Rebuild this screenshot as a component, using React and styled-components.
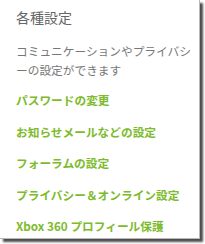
import React from "react";
import styled, { createGlobalStyle } from "styled-components";

const Global = createGlobalStyle`
  html, body { margin: 0; padding: 0; background: #fff; }
  body { font-family: "Noto Sans CJK JP", "Noto Sans", sans-serif; }
`;

const Frame = styled.div`
  width: 205px;
  height: 244px;
  background: #fff;
`;

const Panel = styled.div`
  box-sizing: border-box;
  width: 200px;
  height: 239px;
  background: #fff;
  border-right: 1px solid #b8b8b8;
  border-bottom: 1px solid #b8b8b8;
  box-shadow: 3px 3px 2px rgba(0, 0, 0, 0.7);
  padding: 6px 0 0 16px;
  display: flex;
  flex-direction: column;
`;

const Heading = styled.h2`
  margin: 0;
  font-size: 14px;
  font-weight: normal;
  line-height: 22px;
  color: #666;
`;

const Desc = styled.p`
  margin: 14px 0 0;
  font-size: 11.7px;
  line-height: 18.5px;
  color: #777;
`;

const LinkList = styled.ul`
  list-style: none;
  margin: 12px 0 0;
  padding: 0;
  display: flex;
  flex-direction: column;
  gap: 13.5px;
`;

const LinkItem = styled.li`
  font-size: 11.7px;
  line-height: 18px;
  font-weight: bold;
  color: #7dbb2c;
`;

const links = [
  "パスワードの変更",
  "お知らせメールなどの設定",
  "フォーラムの設定",
  "プライバシー＆オンライン設定",
  "Xbox 360 プロフィール保護",
];

export default function App() {
  return (
    <Frame>
      <Global />
      <Panel>
        <Heading>各種設定</Heading>
        <Desc>
          コミュニケーションやプライバシ
          <br />
          ーの設定ができます
        </Desc>
        <LinkList>
          {links.map((l) => (
            <LinkItem key={l}>{l}</LinkItem>
          ))}
        </LinkList>
      </Panel>
    </Frame>
  );
}
